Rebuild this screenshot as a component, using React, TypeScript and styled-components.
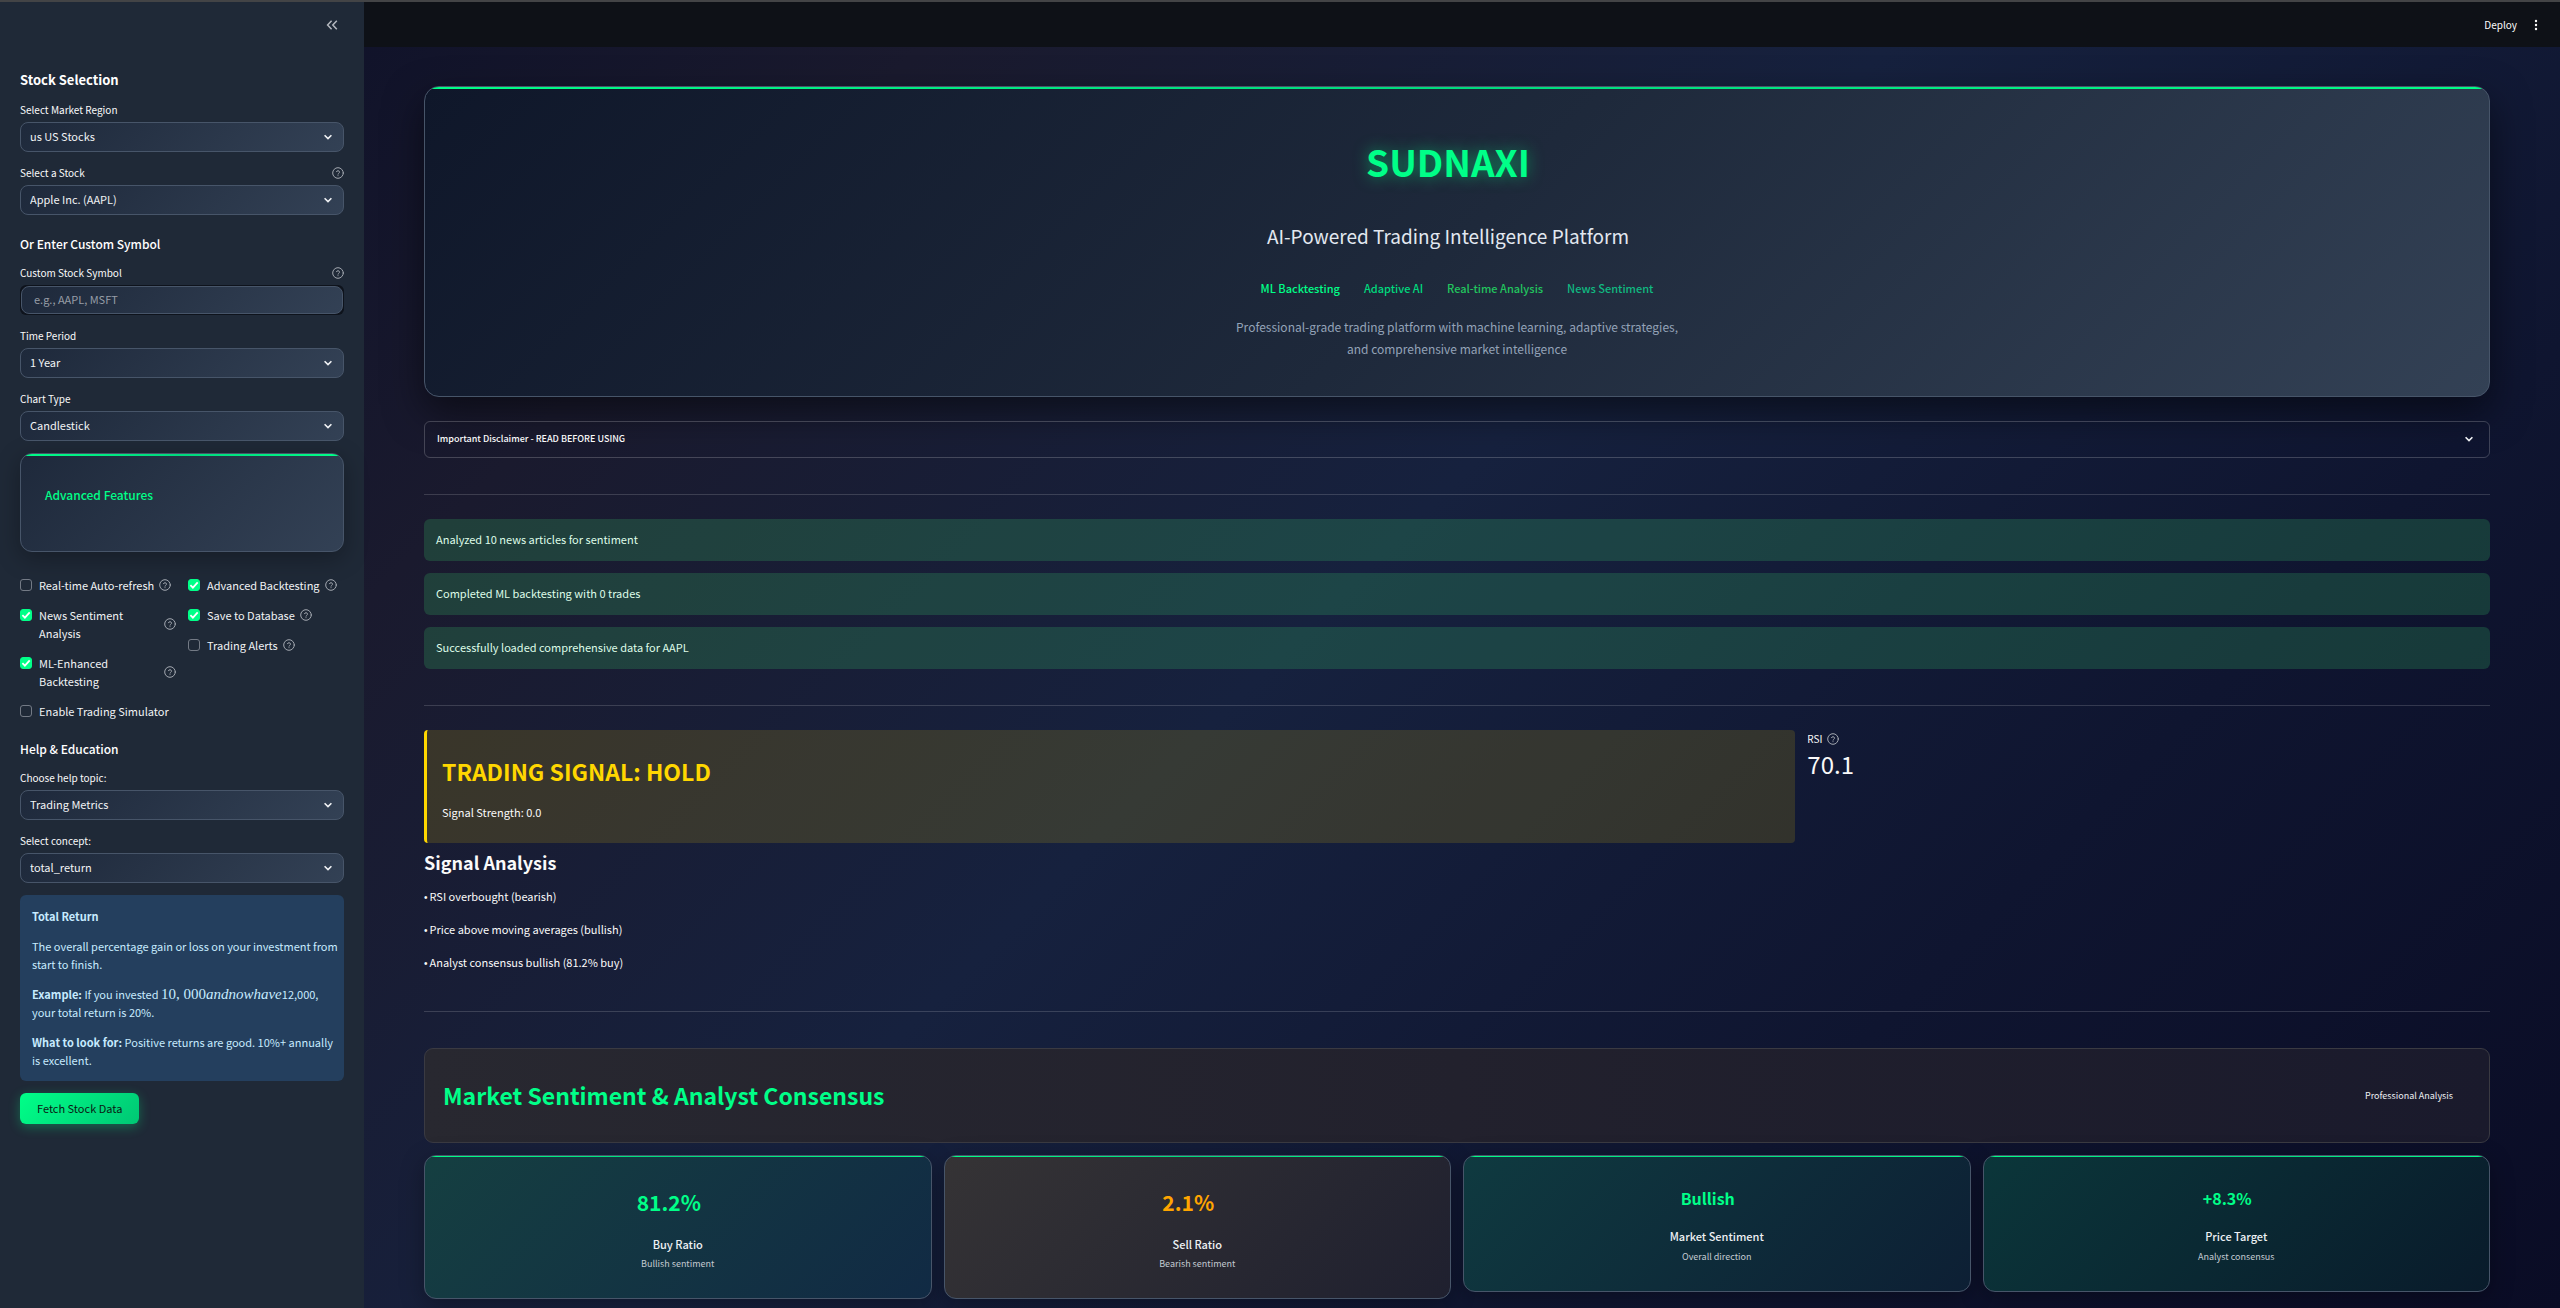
import React, { useId, useState } from "react";
import styled, { createGlobalStyle, css } from "styled-components";

const GlobalStyle = createGlobalStyle`
  *, *::before, *::after { box-sizing: border-box; }
  html, body { margin: 0; padding: 0; }
  body {
    background: #0a0e27;
    color: #fafafa;
    font-family: "Noto Sans CJK SC", "Source Sans Pro", "Open Sans", sans-serif;
    font-size: 11px;
    line-height: 18px;
  }
  button, input, select { font: inherit; color: inherit; margin: 0; }
  h1, h2, h3, h4, p { margin: 0; }
`;

const Shell = styled.div`
  display: flex;
  min-height: 100vh;
  border-top: 2px solid #434446;
  background: linear-gradient(135deg, #0a0e27 0%, #1a1a2e 25%, #16213e 50%, #0f1530 75%, #0a0c25 100%);
`;

/* ---------- Sidebar ---------- */

const Sidebar = styled.aside`
  flex: 0 0 364px;
  padding: 0 20px 24px;
  background: #1f2937;
  display: flex;
  flex-direction: column;
  gap: 12px;
`;

const SidebarTop = styled.div`
  display: flex;
  justify-content: flex-end;
  align-items: center;
  height: 45px;
`;

const IconButton = styled.button`
  display: grid;
  place-items: center;
  width: 24px;
  height: 24px;
  padding: 0;
  border: 0;
  background: transparent;
  color: #b4b8bf;
`;

const SidebarTitle = styled.h2`
  font-size: 13px;
  font-weight: 700;
  line-height: 18px;
  padding-top: 12px;
  color: #fff;
`;

const SidebarSubtitle = styled.h3`
  font-size: 12px;
  font-weight: 500;
  line-height: 16px;
  padding-top: 9px;
  color: #fff;
`;

const FieldBox = styled.div`
  display: flex;
  flex-direction: column;
  gap: 3px;
`;

const FieldHead = styled.div`
  display: flex;
  align-items: center;
  justify-content: space-between;
  height: 18px;
  font-size: 10px;
`;

const controlSurface = css`
  width: 100%;
  height: 30px;
  border: 1px solid #475569;
  border-radius: 8px;
  background: linear-gradient(135deg, #1e293b 0%, #334155 100%);
  outline: none;
`;

const SelectWrap = styled.div`
  position: relative;
  display: flex;

  svg {
    position: absolute;
    right: 10px;
    top: 9px;
    pointer-events: none;
  }
`;

const SelectControl = styled.select`
  ${controlSurface}
  appearance: none;
  padding: 0 28px 2px 9px;
  color: #f1f3f5;
`;

const InputWrap = styled.div`
  padding: 1px;
  border-radius: 6px;
  background: #0e131c;
`;

const TextControl = styled.input`
  ${controlSurface}
  display: block;
  height: 28px;
  padding: 0 12px 2px;
  &::placeholder { color: #979da6; opacity: 1; }
`;

const FeatureCard = styled.div`
  position: relative;
  overflow: hidden;
  height: 99px;
  padding: 32px 24px;
  border: 1px solid #475569;
  border-radius: 12px;
  background: linear-gradient(135deg, #1e293b 0%, #334155 100%);
`;

const FeatureShadow = styled.div`
  border-radius: 12px;
  margin-bottom: 12px;
  box-shadow: 0 6px 24px rgba(0, 0, 0, 0.3);
`;

const TopStripe = styled.span<{ $height: number }>`
  position: absolute;
  left: 0;
  right: 0;
  top: 0;
  height: ${(p) => p.$height}px;
  background: linear-gradient(90deg, #00ff88 0%, #00d97e 50%, #00ff88 100%);
`;

const FeatureTitle = styled.h4`
  font-size: 12px;
  font-weight: 500;
  line-height: 18px;
  color: #00ff88;
`;

const CheckColumns = styled.div`
  display: grid;
  grid-template-columns: 1fr 1fr;
  gap: 12px;
`;

const CheckColumn = styled.div`
  display: flex;
  flex-direction: column;
  gap: 12px;
`;

const CheckRow = styled.div`
  display: flex;
  align-items: center;
  gap: 5px;
`;

const CheckLabel = styled.label`
  display: flex;
  gap: 7px;
  align-items: flex-start;
  color: #f1f3f5;
`;

const TickCell = styled.span`
  display: grid;
  flex: none;
  margin-top: 3px;

  > * { grid-area: 1 / 1; }
  svg { pointer-events: none; }
`;

const TickInput = styled.input`
  appearance: none;
  width: 12px;
  height: 12px;
  border: 1px solid #737a85;
  border-radius: 3px;
  background: transparent;
  &:checked { border-color: #00ff88; background: #00ff88; }
`;

const InfoBox = styled.section`
  display: flex;
  flex-direction: column;
  gap: 12px;
  padding: 12px 4px 12px 12px;
  border-radius: 6px;
  background: #243f5e;
  color: #c7ebff;
  b { font-weight: 700; }
`;

const MathText = styled.span`
  font-family: "Liberation Serif", "Times New Roman", serif;
  font-size: 15px;
  line-height: 1;
  i { font-style: italic; }
`;

const FetchButton = styled.button`
  align-self: flex-start;
  height: 31px;
  padding: 0 17px 2px;
  border: 0;
  border-radius: 6px;
  background: linear-gradient(135deg, #00ff88 0%, #00c774 100%);
  box-shadow: 0 3px 12px rgba(0, 255, 136, 0.3);
  color: #0b1a14;
`;

/* ---------- Main ---------- */

const MainColumn = styled.div`
  flex: 1;
  min-width: 0;
`;

const Toolbar = styled.header`
  display: flex;
  align-items: center;
  justify-content: flex-end;
  gap: 7px;
  height: 45px;
  padding-right: 12px;
  background: #0e1117;
`;

const DeployButton = styled.button`
  border: 0;
  padding: 0;
  background: transparent;
  font-size: 10px;
`;

const Content = styled.main`
  display: flex;
  flex-direction: column;
  gap: 12px;
  padding: 39px 70px 12px 60px;
`;

const Hero = styled.section`
  position: relative;
  overflow: hidden;
  padding: 34px 36px 35px;
  border: 1px solid #475569;
  border-radius: 15px;
  background: linear-gradient(135deg, #0f172a 0%, #1e293b 50%, #334155 100%);
  text-align: center;
`;

const HeroShadow = styled.div`
  margin-bottom: 12px;
  border-radius: 15px;
  box-shadow: 0 15px 38px rgba(0, 0, 0, 0.5);
`;

const HeroTitle = styled.h1`
  padding: 15px 18px 15px 0;
  font-size: 37px;
  font-weight: 700;
  line-height: 50px;
  color: #00ff88;
  text-shadow: 0 0 15px rgba(0, 255, 136, 0.5);
`;

const HeroSubtitle = styled.h3`
  margin-top: 22px;
  padding-right: 18px;
  font-size: 19px;
  font-weight: 400;
  line-height: 26px;
  color: #e2e8f0;
`;

const HeroTags = styled.div`
  display: flex;
  justify-content: center;
  gap: 24px;
  margin-top: 30px;
  font-weight: 500;
`;

const HeroTag = styled.span<{ $color: string }>`
  color: ${(p) => p.$color};
`;

const HeroText = styled.p`
  max-width: 450px;
  margin: 19px auto 1px;
  font-size: 12px;
  line-height: 22px;
  color: #94a3b8;
`;

const Disclaimer = styled.button`
  display: flex;
  align-items: center;
  justify-content: space-between;
  height: 37px;
  padding: 0 14px 2px 12px;
  border: 1px solid rgba(250, 250, 250, 0.2);
  border-radius: 6px;
  background: transparent;
  font-size: 9px;
  font-weight: 500;
  text-align: left;
`;

const Divider = styled.hr<{ $after: number }>`
  width: 100%;
  height: 1px;
  border: 0;
  margin: 24px 0 ${(p) => p.$after}px;
  background: rgba(250, 250, 250, 0.16);
`;

const Alert = styled.div`
  padding: 11px 12px 13px;
  border-radius: 6px;
  background: rgba(61, 213, 109, 0.2);
  color: #dffde9;
`;

const SignalRow = styled.div`
  display: flex;
  gap: 12px;
`;

const SignalCol = styled.div<{ $share: string }>`
  flex: 1 1 calc(${(p) => p.$share} - 12px);
`;

const SignalBox = styled.section`
  height: 113px;
  padding: 26px 15px 0;
  border-left: 3px solid #ffd700;
  border-radius: 4px;
  background: rgba(255, 215, 0, 0.14);
`;

const SignalTitle = styled.h2`
  font-size: 23px;
  font-weight: 700;
  line-height: 30px;
  color: #ffd700;
`;

const SignalStrength = styled.p`
  margin-top: 17px;
`;

const MetricLabel = styled.div`
  display: flex;
  align-items: center;
  gap: 5px;
  font-size: 10px;
`;

const MetricValue = styled.div`
  margin-top: 1px;
  font-size: 24px;
  line-height: 30px;
`;

const AnalysisTitle = styled.h3`
  padding-bottom: 4px;
  font-size: 18px;
  font-weight: 700;
  line-height: 14px;
`;

const ReasonList = styled.div`
  display: flex;
  flex-direction: column;
  gap: 13px;
  margin: 2px 0;
`;

const Reason = styled.p`
  display: flex;
  align-items: baseline;
  gap: 2px;
`;

const Bullet = styled.span`
  font-family: "Liberation Sans", Arial, sans-serif;
  font-size: 10px;
`;

const SectionHeader = styled.section`
  display: flex;
  align-items: center;
  justify-content: space-between;
  height: 95px;
  padding: 0 36px 0 18px;
  border: 1px solid #3a3a42;
  border-radius: 9px;
  background: linear-gradient(90deg, #282830 0%, #22212d 50%, #1a1a2c 100%);
`;

const SectionTitle = styled.h2`
  padding-bottom: 2px;
  font-size: 23px;
  font-weight: 700;
  line-height: 30px;
  color: #00ff88;
`;

const SectionNote = styled.span`
  font-size: 9px;
  color: #eceff2;
`;

const Cards = styled.div`
  display: grid;
  grid-template-columns: repeat(4, 1fr);
  align-items: start;
  gap: 12px;
`;

const Card = styled.article<{ $from: string; $to: string }>`
  position: relative;
  overflow: hidden;
  padding: 25px 24px;
  border: 1px solid #475569;
  border-radius: 12px;
  background: linear-gradient(135deg, ${(p) => p.$from} 0%, ${(p) => p.$to} 100%);
  text-align: center;
`;

const CardShadow = styled.div`
  border-radius: 12px;
  box-shadow: 0 6px 24px rgba(0, 0, 0, 0.3);
`;

const CardValue = styled.h3<{ $color: string; $large: boolean }>`
  padding-right: 18px;
  font-size: ${(p) => (p.$large ? 21 : 16)}px;
  font-weight: 700;
  line-height: ${(p) => (p.$large ? 42 : 34)}px;
  color: ${(p) => p.$color};
`;

const CardName = styled.p`
  margin-top: 12px;
  font-weight: 500;
  color: #eef1f4;
`;

const CardNote = styled.p<{ $large: boolean }>`
  margin-top: ${(p) => (p.$large ? 2 : 3)}px;
  font-size: 9px;
  color: #c3cad1;
`;

/* ---------- Icons ---------- */

const Chevron = () => (
  <svg width="12" height="12" viewBox="0 0 12 12" fill="none" aria-hidden="true">
    <path d="M2.6 4.2 6 7.6 9.4 4.2" stroke="#f1f3f5" strokeWidth="1.6" />
  </svg>
);

const HelpMark = styled.svg`
  flex: none;
  width: 12px;
  height: 12px;
`;

const HelpIcon = () => (
  <HelpMark viewBox="0 0 24 24" fill="none" stroke="#a3a8b0" strokeWidth="2" strokeLinecap="round" aria-hidden="true">
    <circle cx="12" cy="12" r="10.6" />
    <path d="M9 9.4a3.1 3.1 0 0 1 6 .9c0 2-3 2.6-3 4" />
    <path d="M12 17.4v.1" />
  </HelpMark>
);

const Tick = () => (
  <svg width="12" height="12" viewBox="0 0 12 12" fill="none" aria-hidden="true">
    <path d="M2.4 6.2 4.9 8.6 9.7 3.4" stroke="#fff" strokeWidth="1.8" />
  </svg>
);

/* ---------- Parts ---------- */

function SelectField({ label, value, help }: { label: string; value: string; help?: boolean }) {
  const id = useId();
  return (
    <FieldBox>
      <FieldHead>
        <label htmlFor={id}>{label}</label>
        {help && <HelpIcon />}
      </FieldHead>
      <SelectWrap>
        <SelectControl id={id} defaultValue={value}>
          <option>{value}</option>
        </SelectControl>
        <Chevron />
      </SelectWrap>
    </FieldBox>
  );
}

function CheckField({ label, on, help = true }: { label: string; on?: boolean; help?: boolean }) {
  const id = useId();
  const [checked, setChecked] = useState(Boolean(on));
  return (
    <CheckRow>
      <CheckLabel htmlFor={id}>
        <TickCell>
          <TickInput id={id} type="checkbox" checked={checked} onChange={(e) => setChecked(e.target.checked)} />
          {checked && <Tick />}
        </TickCell>
        <span>{label}</span>
      </CheckLabel>
      {help && <HelpIcon />}
    </CheckRow>
  );
}

const tags = [
  { text: "ML Backtesting", color: "#00ff88" },
  { text: "Adaptive AI", color: "#00d97e" },
  { text: "Real-time Analysis", color: "#22c55e" },
  { text: "News Sentiment", color: "#10b981" },
];

const alerts = [
  "Analyzed 10 news articles for sentiment",
  "Completed ML backtesting with 0 trades",
  "Successfully loaded comprehensive data for AAPL",
];

const reasons = [
  "RSI overbought (bearish)",
  "Price above moving averages (bullish)",
  "Analyst consensus bullish (81.2% buy)",
];

const cards = [
  { value: "81.2%", name: "Buy Ratio", note: "Bullish sentiment", color: "#00ff88", large: true, from: "#153f41", to: "#112a44" },
  { value: "2.1%", name: "Sell Ratio", note: "Bearish sentiment", color: "#ffa500", large: true, from: "#353335", to: "#1f202f" },
  { value: "Bullish", name: "Market Sentiment", note: "Overall direction", color: "#00ff88", large: false, from: "#0f3a40", to: "#0d1f34" },
  { value: "+8.3%", name: "Price Target", note: "Analyst consensus", color: "#00ff88", large: false, from: "#0b363a", to: "#091b2b" },
];

export default function App() {
  const symbolId = useId();
  return (
    <>
      <GlobalStyle />
      <Shell>
        <Sidebar>
          <SidebarTop>
            <IconButton aria-label="Collapse sidebar">
              <svg width="12" height="12" viewBox="0 0 12 12" fill="none" stroke="currentColor" strokeWidth="1.5" aria-hidden="true">
                <path d="M5.6 1.8 1.6 6l4 4.2M10.8 1.8 6.8 6l4 4.2" />
              </svg>
            </IconButton>
          </SidebarTop>
          <SidebarTitle>Stock Selection</SidebarTitle>
          <SelectField label="Select Market Region" value="us US Stocks" />
          <SelectField label="Select a Stock" value="Apple Inc. (AAPL)" help />
          <SidebarSubtitle>Or Enter Custom Symbol</SidebarSubtitle>
          <FieldBox>
            <FieldHead>
              <label htmlFor={symbolId}>Custom Stock Symbol</label>
              <HelpIcon />
            </FieldHead>
            <InputWrap>
              <TextControl id={symbolId} type="text" placeholder="e.g., AAPL, MSFT" />
            </InputWrap>
          </FieldBox>
          <SelectField label="Time Period" value="1 Year" />
          <SelectField label="Chart Type" value="Candlestick" />
          <FeatureShadow>
            <FeatureCard>
              <TopStripe $height={2} />
              <FeatureTitle>Advanced Features</FeatureTitle>
            </FeatureCard>
          </FeatureShadow>
          <CheckColumns>
            <CheckColumn>
              <CheckField label="Real-time Auto-refresh" />
              <CheckField label="News Sentiment Analysis" on />
              <CheckField label="ML-Enhanced Backtesting" on />
              <CheckField label="Enable Trading Simulator" help={false} />
            </CheckColumn>
            <CheckColumn>
              <CheckField label="Advanced Backtesting" on />
              <CheckField label="Save to Database" on />
              <CheckField label="Trading Alerts" />
            </CheckColumn>
          </CheckColumns>
          <SidebarSubtitle>Help &amp; Education</SidebarSubtitle>
          <SelectField label="Choose help topic:" value="Trading Metrics" />
          <SelectField label="Select concept:" value="total_return" />
          <InfoBox>
            <p><b>Total Return</b></p>
            <p>The overall percentage gain or loss on your investment from start to finish.</p>
            <p>
              <b>Example:</b> If you invested <MathText>10, 000<i>andnowhave</i></MathText>12,000, your total return is 20%.
            </p>
            <p><b>What to look for:</b> Positive returns are good. 10%+ annually is excellent.</p>
          </InfoBox>
          <FetchButton>Fetch Stock Data</FetchButton>
        </Sidebar>

        <MainColumn>
          <Toolbar>
            <DeployButton>Deploy</DeployButton>
            <IconButton aria-label="Menu">
              <svg width="12" height="12" viewBox="0 0 12 12" fill="#fafafa" aria-hidden="true">
                <circle cx="6" cy="2" r="1.2" />
                <circle cx="6" cy="6" r="1.2" />
                <circle cx="6" cy="10" r="1.2" />
              </svg>
            </IconButton>
          </Toolbar>
          <Content>
            <HeroShadow>
              <Hero>
                <TopStripe $height={2} />
                <HeroTitle>SUDNAXI</HeroTitle>
                <HeroSubtitle>AI-Powered Trading Intelligence Platform</HeroSubtitle>
                <HeroTags>
                  {tags.map((t) => (
                    <HeroTag key={t.text} $color={t.color}>{t.text}</HeroTag>
                  ))}
                </HeroTags>
                <HeroText>
                  Professional-grade trading platform with machine learning, adaptive strategies, and comprehensive market intelligence
                </HeroText>
              </Hero>
            </HeroShadow>
            <Disclaimer aria-expanded="false">
              Important Disclaimer - READ BEFORE USING
              <Chevron />
            </Disclaimer>
            <Divider $after={12} />
            {alerts.map((a) => (
              <Alert key={a}>{a}</Alert>
            ))}
            <Divider $after={12} />
            <SignalRow>
              <SignalCol $share="66.6667%">
                <SignalBox>
                  <SignalTitle>TRADING SIGNAL: HOLD</SignalTitle>
                  <SignalStrength>Signal Strength: 0.0</SignalStrength>
                </SignalBox>
              </SignalCol>
              <SignalCol $share="33.3333%">
                <MetricLabel>RSI <HelpIcon /></MetricLabel>
                <MetricValue>70.1</MetricValue>
              </SignalCol>
            </SignalRow>
            <AnalysisTitle>Signal Analysis</AnalysisTitle>
            <ReasonList>
              {reasons.map((r) => (
                <Reason key={r}>
                  <Bullet>•</Bullet>
                  <span>{r}</span>
                </Reason>
              ))}
            </ReasonList>
            <Divider $after={24} />
            <SectionHeader>
              <SectionTitle>Market Sentiment &amp; Analyst Consensus</SectionTitle>
              <SectionNote>Professional Analysis</SectionNote>
            </SectionHeader>
            <Cards>
              {cards.map((c) => (
                <CardShadow key={c.name}>
                  <Card $from={c.from} $to={c.to}>
                    <TopStripe $height={1} />
                    <CardValue $color={c.color} $large={c.large}>{c.value}</CardValue>
                    <CardName>{c.name}</CardName>
                    <CardNote $large={c.large}>{c.note}</CardNote>
                  </Card>
                </CardShadow>
              ))}
            </Cards>
          </Content>
        </MainColumn>
      </Shell>
    </>
  );
}
